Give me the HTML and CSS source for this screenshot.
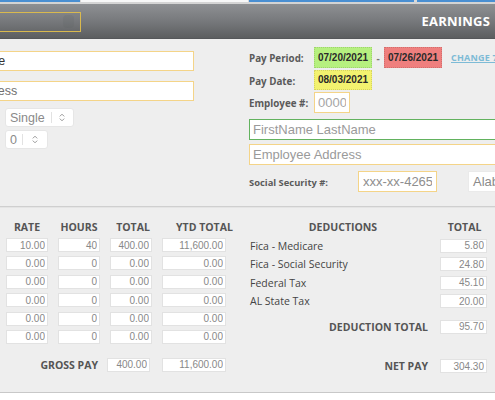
FILE: index.html
```html
<!DOCTYPE html>
<html lang="en">

<head>
    <meta charset="UTF-8">
    <meta name="viewport" content="width=device-width, initial-scale=1.0">
    <title>Pay Stub</title>
    <link rel="stylesheet" href="styles.css">
</head>

<body>
    <div class="topbar">
        <span class="tab tab-first"></span>
        <span class="tab tab-white"></span>
        <span class="tab tab-mid"></span>
        <span class="tab tab-last"></span>
    </div>

    <div class="header">
        <div class="company-select"><span class="company-icon"></span></div>
        <div class="header-title">EARNINGS</div>
    </div>

    <div class="info">
        <div class="info-left">
            <input type="text" class="field field-filled" value="Company Name">
            <input type="text" class="field field-second" placeholder="Company Address">
            <div class="select select-status">
                <span class="select-text">Single</span>
                <span class="select-sep"></span>
                <svg class="select-arrows" width="6" height="9" viewBox="0 0 6 9">
                    <path d="M0.8 3.4 L3 1.2 L5.2 3.4 M0.8 5.6 L3 7.8 L5.2 5.6" fill="none" stroke="#999" stroke-width="1"/>
                </svg>
            </div>
            <div class="select select-count">
                <span class="select-text">0</span>
                <span class="select-sep"></span>
                <svg class="select-arrows" width="6" height="9" viewBox="0 0 6 9">
                    <path d="M0.8 3.4 L3 1.2 L5.2 3.4 M0.8 5.6 L3 7.8 L5.2 5.6" fill="none" stroke="#999" stroke-width="1"/>
                </svg>
            </div>
        </div>

        <div class="info-right">
            <div class="info-row row-period">
                <span class="info-label">Pay Period:</span>
                <span class="date date-green">07/20/2021</span>
                <span class="dash">-</span>
                <span class="date date-red">07/26/2021</span>
                <a class="change-link" href="#">CHANGE 7 DAYS</a>
            </div>
            <div class="info-row row-paydate">
                <span class="info-label">Pay Date:</span>
                <span class="date date-yellow">08/03/2021</span>
            </div>
            <div class="info-row row-employee">
                <span class="info-label">Employee #:</span>
                <input type="text" class="field field-small" placeholder="0000">
            </div>
            <input type="text" class="field field-wide field-green" placeholder="FirstName LastName">
            <input type="text" class="field field-wide field-address" placeholder="Employee Address">
            <div class="info-row row-ssn">
                <span class="info-label label-ssn">Social Security #:</span>
                <input type="text" class="field field-ssn" placeholder="xxx-xx-4265">
                <div class="state-select">Alabama</div>
            </div>
        </div>
    </div>

    <div class="tables">
        <div class="earnings">
            <div class="earn-head">
                <span>RATE</span>
                <span>HOURS</span>
                <span class="head-total">TOTAL</span>
                <span class="head-ytd">YTD TOTAL</span>
            </div>
            <div class="earn-rows">
                <input class="num" value="10.00"><input class="num" value="40"><input class="num" value="400.00"><input class="num" value="11,600.00">
                <input class="num" value="0.00"><input class="num" value="0"><input class="num" value="0.00"><input class="num" value="0.00">
                <input class="num" value="0.00"><input class="num" value="0"><input class="num" value="0.00"><input class="num" value="0.00">
                <input class="num" value="0.00"><input class="num" value="0"><input class="num" value="0.00"><input class="num" value="0.00">
                <input class="num" value="0.00"><input class="num" value="0"><input class="num" value="0.00"><input class="num" value="0.00">
                <input class="num" value="0.00"><input class="num" value="0"><input class="num" value="0.00"><input class="num" value="0.00">
            </div>
            <div class="gross-row">
                <span class="sum-label gross-label">GROSS PAY</span>
                <input class="num gross-total" value="400.00">
                <input class="num gross-ytd" value="11,600.00">
            </div>
        </div>

        <div class="deductions">
            <div class="ded-grid">
                <span class="ded-head">DEDUCTIONS</span>
                <span class="ded-head">TOTAL</span>

                <span class="ded-label">Fica - Medicare</span>
                <input class="num" value="5.80">
                <span class="ded-label">Fica - Social Security</span>
                <input class="num" value="24.80">
                <span class="ded-label">Federal Tax</span>
                <input class="num" value="45.10">
                <span class="ded-label">AL State Tax</span>
                <input class="num" value="20.00">

                <span class="sum-label row-dedtotal">DEDUCTION TOTAL</span>
                <input class="num row-dedtotal" value="95.70">

                <span class="sum-label row-net">NET PAY</span>
                <input class="num row-net" value="304.30">
            </div>
        </div>
    </div>
</body>

</html>
```

FILE: styles.css
```css
body {
    margin: 0;
    padding: 0;
    width: 495px;
    overflow: hidden;
    background-color: #ffffff;
    font-family: "Open Sans", Arial, sans-serif;
}

input {
    margin: 0;
    box-sizing: border-box;
    outline: none;
}

.topbar {
    display: flex;
    height: 2px;
    background-color: #d8d8d8;
}

.tab {
    display: block;
    height: 2px;
    background-color: #4a8fd2;
}

.tab-first {
    width: 80px;
}

.tab-white {
    width: 167px;
    margin-left: 1px;
    background-color: #f7f7f7;
}

.tab-mid {
    width: 165px;
    margin-left: 1px;
}

.tab-last {
    flex: 1;
    margin-left: 3px;
}

.header {
    height: 34px;
    border-top: 2px solid #d4d4d4;
    border-bottom: 1px solid #55575a;
    background: linear-gradient(#8e9093, #77797c 50%, #5c5e60);
    display: flex;
    align-items: center;
    justify-content: space-between;
}

.company-select {
    width: 81px;
    height: 20px;
    box-sizing: border-box;
    border: 1px solid #d9b94e;
    border-left: none;
    margin-top: 1px;
    display: flex;
    align-items: center;
    justify-content: flex-end;
}

.company-icon {
    width: 11px;
    height: 13px;
    margin-right: 6px;
    border-radius: 4px;
    background-color: rgba(90, 92, 95, 0.15);
}

.header-title {
    color: #ffffff;
    font-weight: 700;
    font-size: 13px;
    letter-spacing: 0.2px;
    margin-right: 5px;
    white-space: nowrap;
}

.info {
    display: flex;
    height: 167px;
    background-color: #eeeeee;
    border-bottom: 1px solid #cfcfcf;
}

.info-left {
    flex: none;
    width: 284px;
    margin-left: -90px;
    padding-top: 12px;
    display: flex;
    flex-direction: column;
    align-items: flex-start;
}

.field {
    display: block;
    background-color: #ffffff;
    border: 1px solid #f4d488;
    font-family: "Liberation Sans", Arial, sans-serif;
    font-size: 12.5px;
    color: #444;
    padding: 0 4px;
}

.field::placeholder {
    color: #9a9a9a;
}

.field-filled {
    width: 284px;
    height: 20px;
    color: #333;
}

.field-second {
    width: 284px;
    height: 20px;
    margin-top: 10px;
}

.field-second::placeholder {
    color: #707070;
}

.select {
    display: flex;
    align-items: center;
    height: 19px;
    box-sizing: border-box;
    background-color: #ffffff;
    border: 1px solid #e6e6e6;
    border-radius: 3px;
    margin-left: 95px;
    font-family: "Liberation Sans", Arial, sans-serif;
    font-size: 12.5px;
    color: #8a8a8a;
}

.select-status {
    width: 69px;
    margin-top: 7px;
}

.select-count {
    width: 43px;
    margin-top: 3px;
}

.select-text {
    padding-left: 4px;
}

.select-status .select-text {
    width: 41px;
}

.select-count .select-text {
    width: 12px;
}

.select-sep {
    width: 1px;
    height: 11px;
    background-color: #e2e2e2;
}

.select-arrows {
    margin-left: 7px;
}

.select-count .select-arrows {
    margin-left: 9px;
}

.info-right {
    flex: none;
    width: 300px;
    margin-left: 55px;
    padding-top: 8px;
}

.info-row {
    display: flex;
    align-items: center;
    white-space: nowrap;
}

.info-label {
    width: 65px;
    flex: none;
    font-size: 9.8px;
    font-weight: 700;
    color: #5a5a5a;
    padding-top: 2px;
}

.date {
    display: block;
    width: 58px;
    box-sizing: border-box;
    text-align: center;
    font-family: "Liberation Sans", Arial, sans-serif;
    font-weight: 700;
    font-size: 10px;
    color: #2a2a2a;
    line-height: 19px;
    border: 1px dotted rgba(0, 0, 0, 0.12);
}

.date-green {
    background-color: #b6f07f;
    height: 21px;
    line-height: 19px;
}

.date-red {
    background-color: #ef7f7e;
    height: 21px;
    line-height: 19px;
}

.date-yellow {
    background-color: #f3f26f;
    height: 20px;
    line-height: 18px;
}

.dash {
    width: 12px;
    text-align: center;
    font-size: 10px;
    font-weight: 700;
    color: #777;
}

.change-link {
    margin-left: 9px;
    font-size: 9px;
    font-weight: 700;
    color: #7dbbd6;
    text-decoration: underline;
    letter-spacing: 0.2px;
}

.row-paydate {
    margin-top: 2px;
}

.row-employee {
    margin-top: 2px;
}

.field-small {
    width: 36px;
    height: 21px;
    font-size: 13px;
    padding: 0 3px;
}

.field-small::placeholder {
    color: #a5a5a5;
}

.field-wide {
    width: 300px;
    height: 21px;
    font-size: 13px;
    padding: 0 3px;
}

.field-green {
    margin-top: 6px;
    border-color: #62b25e;
}

.field-address {
    margin-top: 4px;
}

.row-ssn {
    margin-top: 6px;
}

.label-ssn {
    width: 109px;
    font-size: 9.4px;
}

.field-ssn {
    width: 79px;
    height: 21px;
    font-size: 13px;
    padding: 0 4px;
}

.field-ssn::placeholder {
    color: #8e8e8e;
}

.state-select {
    margin-left: 31px;
    height: 21px;
    width: 60px;
    box-sizing: border-box;
    background-color: #ffffff;
    border: 1px solid #eaeaea;
    padding-left: 4px;
    font-family: "Liberation Sans", Arial, sans-serif;
    font-size: 13px;
    line-height: 19px;
    color: #8a8a8a;
}

.tables {
    display: flex;
    height: 186px;
    background-color: #eeeeee;
    border-top: 1px solid #e4e4e4;
    border-bottom: 1px solid #c8c8c8;
    padding-top: 12px;
    box-sizing: border-box;
}

.earnings {
    flex: none;
    width: 244px;
    padding-left: 6px;
}

.earn-head,
.earn-rows {
    display: grid;
    grid-template-columns: 42px 42px 42px 64px;
    column-gap: 10px;
}

.earn-head span,
.ded-head {
    font-size: 10.5px;
    font-weight: 700;
    color: #555;
    line-height: 14px;
    text-align: center;
    white-space: nowrap;
}

.head-total {
    padding-left: 4px;
}

.head-ytd {
    padding-left: 14px;
}

.earn-rows {
    margin-top: 4px;
    row-gap: 4.4px;
}

.num {
    display: block;
    width: 100%;
    height: 14px;
    background-color: #ffffff;
    border: 1px solid #e2e2e2;
    padding: 0 2px;
    text-align: right;
    font-family: "Liberation Sans", Arial, sans-serif;
    font-size: 10px;
    color: #888;
}

.gross-row {
    display: flex;
    align-items: center;
    margin-top: 14px;
}

.sum-label {
    font-size: 10.5px;
    font-weight: 700;
    color: #555;
    line-height: 14px;
    text-align: right;
    padding-right: 8px;
    white-space: nowrap;
}

.gross-label {
    width: 92px;
    box-sizing: border-box;
    padding-right: 0;
}

.gross-total {
    width: 43px;
    margin-left: 9px;
}

.gross-ytd {
    width: 64px;
    margin-left: 12px;
}

.deductions {
    flex: 1;
}

.ded-grid {
    display: grid;
    grid-template-columns: 186px 47px;
    column-gap: 4px;
    row-gap: 4.5px;
}

.ded-head + .ded-head {
    padding-left: 2px;
}

.ded-label {
    font-size: 10.5px;
    color: #444;
    line-height: 14px;
    white-space: nowrap;
}

.row-dedtotal {
    margin-top: 7px;
}

.row-net {
    margin-top: 21px;
}
```
